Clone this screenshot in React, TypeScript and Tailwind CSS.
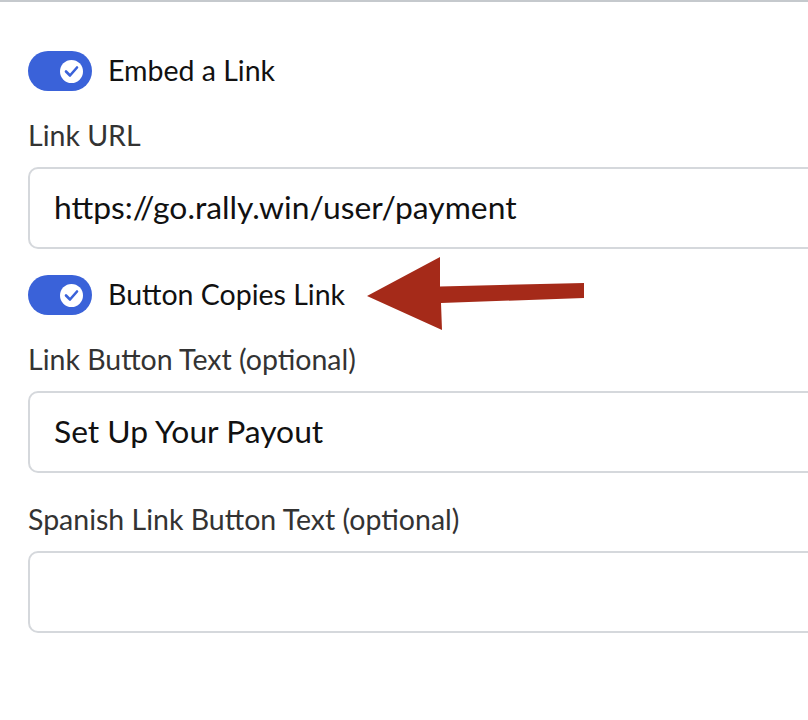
import React from "react";

const Toggle: React.FC<{ label: string }> = ({ label }) => {
  return (
    <div className="flex items-center">
      <div className="w-16 h-10 rounded-full bg-[#3a62d9] flex items-center justify-end pr-[9px]">
        <div className="w-[23px] h-[23px] rounded-full bg-white flex items-center justify-center">
          <svg width="23" height="23" viewBox="0 0 23 23" fill="none">
            <polyline
              points="6,11.5 10,15.5 17,7.5"
              stroke="#3a62d9"
              strokeWidth="2.6"
              strokeLinecap="round"
              strokeLinejoin="round"
            />
          </svg>
        </div>
      </div>
      <span className="ml-4 text-[28.5px] text-[#111] leading-8 -mt-[2px]">{label}</span>
    </div>
  );
};

const Field: React.FC<{ value?: string }> = ({ value }) => {
  return (
    <div className="w-[800px] h-[82px] border-2 border-[#d5d8dc] rounded-[10px] flex items-center pl-6 text-[31.8px] text-[#111]">
      {value}
    </div>
  );
};

const App: React.FC = () => {
  return (
    <div
      className="relative w-[808px] h-[720px] overflow-hidden bg-white border-t-2 border-[#c5c9cd] pl-[28px]"
      style={{ fontFamily: "Lato, 'Noto Sans', sans-serif" }}
    >
      <div className="pt-[49px]">
        <Toggle label="Embed a Link" />
      </div>
      <div className="mt-[28px] text-[28.5px] leading-8 text-[#333]">Link URL</div>
      <div className="mt-[16px]">
        <Field value="https://go.rally.win/user/payment" />
      </div>
      <div className="mt-[26px]">
        <Toggle label="Button Copies Link" />
      </div>
      <div className="mt-[28px] text-[28.5px] leading-8 text-[#333]">Link Button Text (optional)</div>
      <div className="mt-[16px]">
        <Field value="Set Up Your Payout" />
      </div>
      <div className="mt-[30px] text-[28.5px] leading-8 text-[#333]">Spanish Link Button Text (optional)</div>
      <div className="mt-[16px]">
        <Field />
      </div>

      <svg className="absolute left-0 top-0" width="808" height="720" viewBox="0 0 808 720">
        <polygon
          points="367,294 440,255 440,284.5 584,281 584,296 441,301 442,328"
          fill="#a52a19"
        />
      </svg>
    </div>
  );
};

export default App;
